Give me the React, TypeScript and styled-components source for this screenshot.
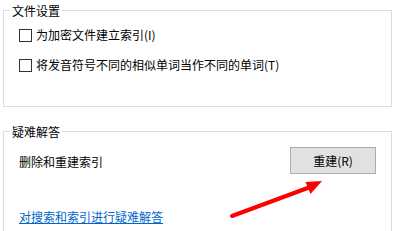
import React from "react";
import styled, { createGlobalStyle } from "styled-components";

const GlobalStyle = createGlobalStyle`
  html, body {
    margin: 0;
    padding: 0;
    background: #ffffff;
  }
  body {
    font-family: "Noto Sans CJK SC", "Noto Sans", sans-serif;
    font-size: 12px;
    color: #000000;
  }
`;

const Page = styled.div`
  position: relative;
  width: 393px;
  height: 231px;
  overflow: hidden;
  box-sizing: border-box;
  padding: 2px 1px 0 3px;
  background: #ffffff;
`;

const Group = styled.fieldset<{ $gap?: number }>`
  margin: ${(p) => p.$gap ?? 0}px 0 0 0;
  padding: 0;
  border: 1px solid #dcdcdc;
  min-width: 0;
`;

const Legend = styled.legend`
  margin-left: 6px;
  padding: 0 2px;
  height: 17px;
  line-height: 17px;
  font-size: 12px;
  color: #000;
`;

const Body = styled.div<{ $pt: number; $pb: number }>`
  display: flex;
  flex-direction: column;
  padding: ${(p) => p.$pt}px 15px ${(p) => p.$pb}px 15px;
`;

const CheckList = styled.div`
  display: flex;
  flex-direction: column;
  gap: 12px;
`;

const CheckRow = styled.label`
  display: flex;
  align-items: center;
  gap: 4px;
  height: 18px;
  line-height: 18px;
  white-space: nowrap;
`;

const Box = styled.span`
  display: inline-block;
  width: 13px;
  height: 13px;
  box-sizing: border-box;
  border: 1px solid #333333;
  background: #ffffff;
  flex: none;
`;

const ActionRow = styled.div`
  display: flex;
  justify-content: space-between;
  align-items: flex-start;
`;

const Label = styled.span`
  margin-top: 6px;
  line-height: 18px;
`;

const Button = styled.button`
  width: 86px;
  height: 27px;
  box-sizing: border-box;
  border: 1px solid #adadad;
  background: #e1e1e1;
  font-family: inherit;
  font-size: 12px;
  color: #000;
  padding: 0;
  line-height: 25px;
`;

const Link = styled.a`
  margin-top: 34px;
  line-height: 18px;
  color: #0066cc;
  text-decoration: underline;
  align-self: flex-start;
  cursor: pointer;
`;

const ArrowLayer = styled.svg`
  position: absolute;
  left: 0;
  top: 0;
  pointer-events: none;
`;

export default function App() {
  return (
    <>
      <GlobalStyle />
      <Page>
        <Group>
          <Legend>文件设置</Legend>
          <Body $pt={7} $pb={32}>
            <CheckList>
              <CheckRow>
                <Box />
                为加密文件建立索引(I)
              </CheckRow>
              <CheckRow>
                <Box />
                将发音符号不同的相似单词当作不同的单词(T)
              </CheckRow>
            </CheckList>
          </Body>
        </Group>
        <Group $gap={16}>
          <Legend>疑难解答</Legend>
          <Body $pt={7} $pb={30}>
            <ActionRow>
              <Label>删除和重建索引</Label>
              <Button>重建(R)</Button>
            </ActionRow>
            <Link>对搜索和索引进行疑难解答</Link>
          </Body>
        </Group>
        <ArrowLayer width="393" height="231" viewBox="0 0 393 231">
          <line
            x1="232"
            y1="216"
            x2="309"
            y2="187.5"
            stroke="#ff0000"
            strokeWidth="4"
            strokeLinecap="round"
          />
          <polygon points="322,181 305.5,182 310.5,194" fill="#ff0000" />
        </ArrowLayer>
      </Page>
    </>
  );
}
